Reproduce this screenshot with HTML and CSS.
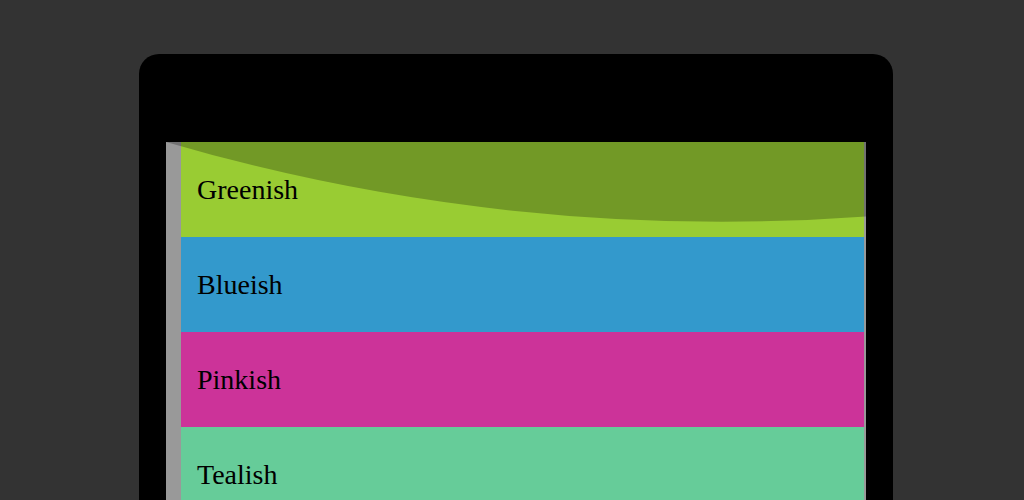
FILE: index.html
```html
<!DOCTYPE html>
<html>
<head>
<meta charset="utf-8">
<link rel="stylesheet" href="styles.css">
</head>
<body>
<div class="device">
  <div class="screen">
    <ul class="list">
      <li class="row greenish">Greenish</li>
      <li class="row blueish">Blueish</li>
      <li class="row pinkish">Pinkish</li>
      <li class="row tealish">Tealish</li>
    </ul>
    <svg class="wave" width="700" height="95" viewBox="0 0 700 95">
      <path d="M0 0 A1976 1976 0 0 0 700 74.5 L700 0 Z" fill="rgba(0,0,0,0.25)"/>
    </svg>
  </div>
</div>
</body>
</html>
```
FILE: styles.css
```css
html, body {
  margin: 0;
  padding: 0;
  background: #333333;
  height: 500px;
  overflow: hidden;
}
.device {
  margin: 54px 0 0 139px;
  width: 754px;
  height: 446px;
  background: #000;
  border-radius: 20px 20px 0 0;
  padding: 88px 27px 0 27px;
  box-sizing: border-box;
}
.screen {
  position: relative;
  width: 700px;
  height: 358px;
  background: #999999;
  padding: 0 2px 0 15px;
  box-sizing: border-box;
  overflow: hidden;
}
.list {
  list-style: none;
  margin: 0;
  padding: 0;
  display: flex;
  flex-direction: column;
}
.row {
  flex: none;
  height: 95px;
  display: flex;
  align-items: center;
  padding-left: 16px;
  font-family: "Liberation Serif", "Times New Roman", serif;
  font-size: 28px;
  color: #000;
}
.greenish { background: #99cc33; }
.blueish { background: #3399cc; }
.pinkish { background: #cc3399; }
.tealish { background: #66cc99; }
.wave {
  position: absolute;
  top: 0;
  left: 0;
  display: block;
}
```
